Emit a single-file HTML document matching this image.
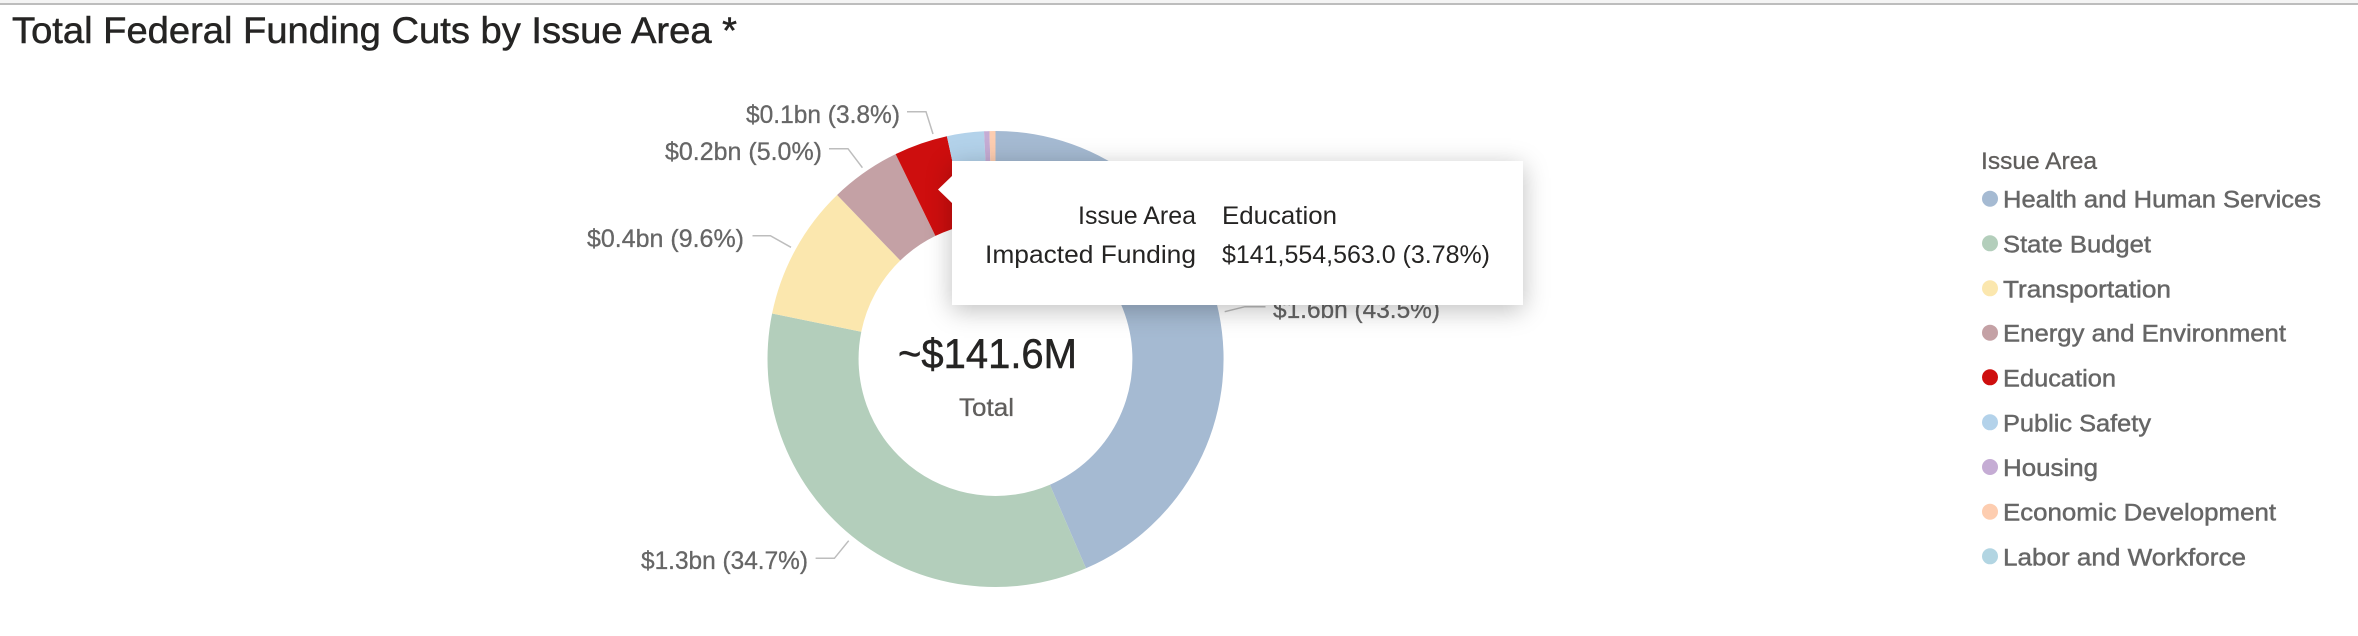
<!DOCTYPE html>
<html>
<head>
<meta charset="utf-8">
<style>
html,body{margin:0;padding:0;background:#fff;width:2358px;height:636px;overflow:hidden}
svg{position:absolute;left:0;top:0}
text{font-family:"Liberation Sans",sans-serif}
#tip{position:absolute;left:952px;top:161px;width:571px;height:144px;background:#fff;box-shadow:0 5px 24px rgba(0,0,0,.26)}
</style>
</head>
<body>
<svg width="2358" height="636" viewBox="0 0 2358 636">
<rect x="0" y="0" width="2358" height="3" fill="#f4f4f4"/>
<rect x="0" y="3" width="2358" height="2" fill="#bdbdbd"/>
<text x="12" y="43" font-size="37" fill="#252423" stroke="#252423" stroke-width=".5" textLength="725" lengthAdjust="spacingAndGlyphs">Total Federal Funding Cuts by Issue Area *</text>

<path d="M995.5 131A228 228 0 0 1 1086 568.3L1049.9 484.7A137 137 0 0 0 995.5 222Z" fill="#A5BAD2"/>
<path d="M1086 568.3A228 228 0 0 1 772.1 313.5L861.3 331.7A137 137 0 0 0 1049.9 484.7Z" fill="#B3CEBB"/>
<path d="M772.1 313.5A228 228 0 0 1 837.1 195L900.3 260.5A137 137 0 0 0 861.3 331.7Z" fill="#FBE7AE"/>
<path d="M837.1 195A228 228 0 0 1 895.6 154.1L935.4 235.9A137 137 0 0 0 900.3 260.5Z" fill="#C4A1A5"/>
<path d="M895.6 154.1A228 228 0 0 1 946.9 136.2L966.3 225.2A137 137 0 0 0 935.4 235.9Z" fill="#CE0E0E"/>
<path d="M946.9 136.2A228 228 0 0 1 984 131.3L988.6 222.2A137 137 0 0 0 966.3 225.2Z" fill="#B3D2EA"/>
<path d="M984 131.3A228 228 0 0 1 989.5 131.1L991.9 222A137 137 0 0 0 988.6 222.2Z" fill="#C5ACD4"/>
<path d="M989.5 131.1A228 228 0 0 1 995.5 131L995.5 222A137 137 0 0 0 991.9 222Z" fill="#FDCDB0"/>

<g fill="none" stroke="#bdbdbd" stroke-width="1.5">
<path d="M907 111.7H926L933 134"/>
<path d="M829 148.7H848L862.4 167.7"/>
<path d="M752.5 235.7H770.4L791 247.3"/>
<path d="M815.6 558.3H834.4L848.7 540.7"/>
<path d="M1224.7 311.7L1245 306.7H1265.5"/>
</g>
<g font-size="25" fill="#666" stroke="#666" stroke-width=".3">
<text x="746" y="123" textLength="154" lengthAdjust="spacingAndGlyphs">$0.1bn (3.8%)</text>
<text x="665" y="160" textLength="157" lengthAdjust="spacingAndGlyphs">$0.2bn (5.0%)</text>
<text x="587" y="247" textLength="157" lengthAdjust="spacingAndGlyphs">$0.4bn (9.6%)</text>
<text x="641" y="569" textLength="167" lengthAdjust="spacingAndGlyphs">$1.3bn (34.7%)</text>
<text x="1273" y="318" textLength="167" lengthAdjust="spacingAndGlyphs">$1.6bn (43.5%)</text>
</g>
<text x="898" y="368" font-size="42" fill="#252423" stroke="#252423" stroke-width=".5" textLength="179" lengthAdjust="spacingAndGlyphs">~$141.6M</text>
<text x="959" y="416" font-size="25" fill="#605E5C" stroke="#605E5C" stroke-width=".3" textLength="55" lengthAdjust="spacingAndGlyphs">Total</text>

<text x="1981" y="169" font-size="24" fill="#605E5C" stroke="#605E5C" stroke-width=".3" textLength="116" lengthAdjust="spacingAndGlyphs">Issue Area</text>
<g>
<circle cx="1990" cy="198.7" r="8" fill="#A5BAD2"/>
<circle cx="1990" cy="243.3" r="8" fill="#B3CEBB"/>
<circle cx="1990" cy="288.3" r="8" fill="#FBE7AE"/>
<circle cx="1990" cy="332.7" r="8" fill="#C4A1A5"/>
<circle cx="1990" cy="377.3" r="8" fill="#CE0E0E"/>
<circle cx="1990" cy="422.3" r="8" fill="#B3D2EA"/>
<circle cx="1990" cy="467" r="8" fill="#C5ACD4"/>
<circle cx="1990" cy="511.7" r="8" fill="#FDCDB0"/>
<circle cx="1990" cy="556.3" r="8" fill="#B2D5E2"/>
</g>
<g font-size="24" fill="#666" stroke="#666" stroke-width=".45">
<text x="2003" y="207.7" textLength="318" lengthAdjust="spacingAndGlyphs">Health and Human Services</text>
<text x="2003" y="252.3" textLength="148" lengthAdjust="spacingAndGlyphs">State Budget</text>
<text x="2003" y="297.3" textLength="168" lengthAdjust="spacingAndGlyphs">Transportation</text>
<text x="2003" y="341.7" textLength="283" lengthAdjust="spacingAndGlyphs">Energy and Environment</text>
<text x="2003" y="386.3" textLength="113" lengthAdjust="spacingAndGlyphs">Education</text>
<text x="2003" y="431.3" textLength="148" lengthAdjust="spacingAndGlyphs">Public Safety</text>
<text x="2003" y="476" textLength="95" lengthAdjust="spacingAndGlyphs">Housing</text>
<text x="2003" y="520.7" textLength="273" lengthAdjust="spacingAndGlyphs">Economic Development</text>
<text x="2003" y="565.3" textLength="243" lengthAdjust="spacingAndGlyphs">Labor and Workforce</text>
</g>
</svg>
<div id="tip"></div>
<svg width="2358" height="636" viewBox="0 0 2358 636">
<polygon points="938,189.5 952.5,175.5 952.5,203.5" fill="#fff"/>
<g font-size="25" fill="#252423">
<text x="1078" y="224" textLength="118" lengthAdjust="spacingAndGlyphs">Issue Area</text>
<text x="985" y="263" textLength="211" lengthAdjust="spacingAndGlyphs">Impacted Funding</text>
<text x="1222" y="224" textLength="115" lengthAdjust="spacingAndGlyphs">Education</text>
<text x="1222" y="263" textLength="268" lengthAdjust="spacingAndGlyphs">$141,554,563.0 (3.78%)</text>
</g>
</svg>
</body>
</html>
